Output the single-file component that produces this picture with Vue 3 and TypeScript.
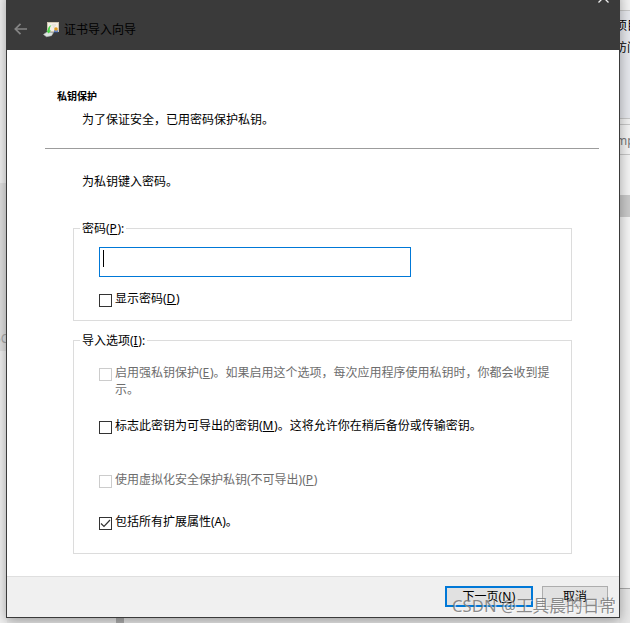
<script setup lang="ts">
import { ref } from 'vue'

interface ImportOption {
  id: string
  before: string
  key: string
  after: string
  checked: boolean
  disabled: boolean
}

const password = ref('')
const showPassword = ref(false)
const options = ref<ImportOption[]>([
  { id: 'strong', before: '启用强私钥保护(', key: 'E', after: ')。如果启用这个选项，每次应用程序使用私钥时，你都会收到提示。', checked: false, disabled: true },
  { id: 'export', before: '标志此密钥为可导出的密钥(', key: 'M', after: ')。这将允许你在稍后备份或传输密钥。', checked: false, disabled: false },
  { id: 'virtual', before: '使用虚拟化安全保护私钥(不可导出)(', key: 'P', after: ')', checked: false, disabled: true },
  { id: 'extended', before: '包括所有扩展属性(A)。', key: '', after: '', checked: true, disabled: false },
])

function toggle(option: ImportOption) {
  if (!option.disabled) option.checked = !option.checked
}
</script>

<template>
  <div class="desktop">
    <div class="behind">
      <div class="strip left">
        <div class="l-top"></div>
        <div class="l-mid"><span>5C</span></div>
        <div class="l-bottom"></div>
      </div>
      <div class="middle"><i></i></div>
      <div class="strip right">
        <div class="r-top"></div>
        <div class="r-list"><span>项目</span><span>访问</span></div>
        <div class="r-gap"></div>
        <div class="r-path"><span>mp</span></div>
        <div class="r-space"></div>
        <div class="r-selected"></div>
        <div class="r-rest"></div>
        <div class="r-floor"></div>
      </div>
    </div>

    <section class="dialog">
      <header class="titlebar">
        <svg class="back" width="14" height="12" viewBox="0 0 14 12"><path d="M6.500 .8 1.300 6l5.200 5.200M1.500 6H13" /></svg>
        <svg class="cert" width="17" height="17" viewBox="0 0 17 17">
          <rect x="4.500" y="1.500" width="11" height="9" fill="#f4efe6" stroke="#cfc4b2" />
          <path d="M9 4h4M10 6h2" stroke="#ddd8cf" />
          <path d="M12 9v2.500M14 9v2.500" stroke="#2f62c8" stroke-width="1.300" />
          <circle cx="13" cy="8" r="1.800" fill="#e09a1c" />
          <path d="M.5 13.500 4 11l6.500 .5-2 3.200-5 1z" fill="#dde2e0" stroke="#b4bab7" stroke-width=".6" />
          <path d="M8.500 4C5.500 5 4.800 7.500 4.800 9.500H3.300L5.500 12.500l2.700-3H6.800C6.700 8 7 5.500 8.500 4z" fill="#4bd548" />
        </svg>
        <span class="title">证书导入向导</span>
        <svg class="close" width="11" height="11" viewBox="0 0 11 11"><path d="M.5.5l10 10M10.500.5l-10 10" /></svg>
      </header>

      <main class="page">
        <h1>私钥保护</h1>
        <p class="subtitle">为了保证安全，已用密码保护私钥。</p>
        <hr />
        <p class="prompt">为私钥键入密码。</p>

        <div class="group password-group">
          <div class="legend"><span>密码(<u>P</u>):</span></div>
          <div class="field"><i class="caret"></i><span>{{ password }}</span></div>
          <div class="option" @click="showPassword = !showPassword">
            <span class="box"><svg v-if="showPassword" viewBox="0 0 11 11"><path d="M1 5.500l3 3L10 2" /></svg></span>
            <span class="label">显示密码(<u>D</u>)</span>
          </div>
        </div>

        <div class="group options-group">
          <div class="legend"><span>导入选项(<u>I</u>):</span></div>
          <div
            v-for="option in options"
            :key="option.id"
            class="option"
            :class="[option.id, { disabled: option.disabled }]"
            @click="toggle(option)"
          >
            <span class="box"><svg v-if="option.checked" viewBox="0 0 11 11"><path d="M1 5.500l3 3L10 2" /></svg></span>
            <span class="label">{{ option.before }}<u v-if="option.key">{{ option.key }}</u>{{ option.after }}</span>
          </div>
        </div>
      </main>

      <footer class="footer">
        <div class="button primary">下一页(<u>N</u>)</div>
        <div class="button">取消</div>
      </footer>
    </section>

    <div class="watermark">CSDN @工具晨的日常</div>
  </div>
</template>

<style>
body {
  margin: 0;
  overflow: hidden;
}
</style>

<style scoped>
* {
  box-sizing: border-box;
}
.desktop {
  position: relative;
  width: 630px;
  height: 623px;
  overflow: hidden;
  background: #ececec;
  color: #000;
  font: 12px/17px "Noto Sans", "Noto Sans CJK SC", sans-serif;
}
.behind {
  display: flex;
  height: 623px;
}
.strip {
  display: flex;
  flex-direction: column;
  overflow: hidden;
}
.left {
  width: 7px;
}
.middle {
  display: flex;
  flex: 1;
  align-items: flex-end;
  background: #ececec;
}
.middle i {
  width: 8px;
  height: 8px;
  margin-left: 109px;
  background: #b0b0b0;
}
.right {
  width: 11px;
}
.l-top {
  height: 183px;
  background: #f2f2f2;
}
.l-mid {
  display: flex;
  align-items: flex-end;
  height: 168px;
  padding-bottom: 4px;
  background: #e2e2e2;
  color: #aaa;
}
.l-mid span {
  margin-left: -6px;
}
.l-bottom {
  flex: 1;
  background: #f2f2f2;
}
.r-top {
  height: 11px;
  background: #f4f4f4;
  border-bottom: 1px solid #c8c8c8;
}
.r-list {
  display: flex;
  flex-direction: column;
  gap: 5px;
  height: 108px;
  padding-top: 6px;
  background: #e6e8ed;
  border-bottom: 1px solid #c8c8c8;
  white-space: nowrap;
}
.r-list span {
  margin-left: -4px;
}
.r-gap {
  height: 6px;
  background: #f2f2f2;
  border-bottom: 1px solid #c8c8c8;
}
.r-path {
  display: flex;
  height: 30px;
  padding-top: 7px;
  background: #f4f4f4;
  border-bottom: 1px solid #c8c8c8;
  color: #777;
}
.r-path span {
  margin-left: -3px;
}
.r-space {
  height: 40px;
  background: #f4f4f4;
}
.r-selected {
  height: 22px;
  background: #cacaca;
}
.r-rest {
  flex: 1;
  background: #f5f5f5;
}
.r-floor {
  height: 35px;
  background: #e8e8e8;
  border-top: 1px solid #aaa;
}
.dialog {
  position: absolute;
  top: -10px;
  left: 6px;
  display: flex;
  flex-direction: column;
  width: 614px;
  height: 628px;
  border: 1px solid #3a3a3a;
  border-top: 0;
  background: #fff;
  box-shadow: 0 3px 12px rgba(0, 0, 0, .35);
}
.titlebar {
  display: flex;
  align-items: center;
  height: 60px;
  padding: 18px 10px 0 7px;
  background: #3a3a3a;
}
.back {
  fill: none;
  stroke: #858585;
  stroke-width: 1.7;
}
.cert {
  margin-left: 15px;
}
.title {
  margin-left: 4px;
  padding-top: 1px;
  line-height: 18px;
}
.close {
  align-self: flex-start;
  margin: -16px 0 0 auto;
  fill: none;
  stroke: #eee;
  stroke-width: 1.3;
}
.page {
  flex: 1;
  padding: 39px 20px 0 38px;
}
h1 {
  margin: 0 0 0 12px;
  font-size: 10px;
  font-weight: 700;
  line-height: 14px;
}
.subtitle {
  margin: 8px 0 0 37px;
}
hr {
  height: 1px;
  margin: 20px 0 0;
  border: 0;
  background: #9c9c9c;
}
.prompt {
  margin: 24px 0 0 37px;
}
.group {
  width: 499px;
  margin-left: 28px;
  border: 1px solid #dcdcdc;
}
.password-group {
  height: 93px;
  margin-top: 38px;
}
.options-group {
  height: 214px;
  margin-top: 19px;
}
.legend {
  height: 17px;
  margin-top: -9px;
  padding-left: 6px;
}
.legend span {
  display: inline-block;
  padding: 0 2px;
  background: #fff;
}
u {
  letter-spacing: .6px;
}
.field {
  width: 312px;
  height: 30px;
  margin: 10px 0 0 25px;
  padding: 2px 3px;
  border: 1px solid #0078d7;
}
.caret {
  display: block;
  width: 1px;
  height: 17px;
  background: #000;
}
.option {
  display: flex;
  align-items: flex-start;
  width: 460px;
  margin-left: 25px;
}
.password-group .option {
  margin-top: 13px;
}
.box {
  flex: none;
  width: 13px;
  height: 13px;
  margin: 4px 3px 0 0;
  border: 1px solid #333;
}
.box svg {
  display: block;
  fill: none;
  stroke: #333;
  stroke-width: 1.2;
}
.disabled {
  color: #6d6d6d;
}
.disabled .box {
  border-color: #ccc;
}
.strong {
  height: 53px;
  margin-top: 15px;
}
.export {
  height: 54px;
}
.virtual {
  height: 42px;
}
.footer {
  display: flex;
  gap: 9px;
  justify-content: flex-end;
  height: 41px;
  padding: 9px 11px 0 0;
  background: #f0f0f0;
  border-top: 1px solid #dfdfdf;
}
.button {
  width: 66px;
  height: 21px;
  border: 1px solid #adadad;
  background: #e1e1e1;
  line-height: 19px;
  text-align: center;
}
.primary {
  width: 88px;
  border: 2px solid #0078d7;
  line-height: 17px;
}
.watermark {
  position: absolute;
  top: 595px;
  left: 452px;
  color: rgba(120, 120, 120, .85);
  font-size: 16.7px;
  line-height: 22px;
  white-space: nowrap;
  text-shadow: 1px 1px 0 rgba(255, 255, 255, .6);
}
</style>
